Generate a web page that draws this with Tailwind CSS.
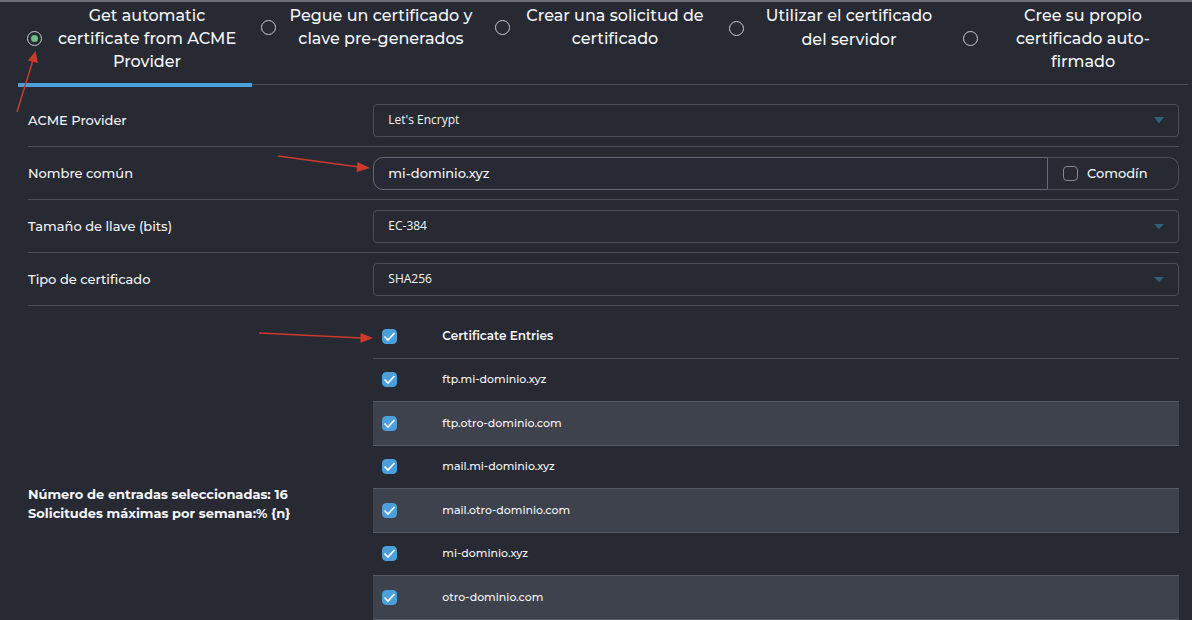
<!DOCTYPE html>
<html lang="es">
<head>
    <meta charset="UTF-8">
    <meta name="viewport" content="width=device-width, initial-scale=1.0">
    <title>Certificado SSL</title>
    <script src="https://cdn.jsdelivr.net/npm/@tailwindcss/browser@4"></script>
</head>
<body class="relative min-h-screen overflow-x-hidden bg-[#272a33] text-[#f4f5f8] font-['Montserrat','Inter',sans-serif]">

    <form class="border-t-2 border-[#6c6f76] pl-[18px] pr-1">

        <!-- Certificate source -->
        <div class="grid grid-cols-5 h-[85px] text-[16px] font-medium leading-[23px] text-center">
            <div class="flex items-start border-b-4 border-[#4b9fdb] pt-[2px] pl-[9px]">
                <label class="flex w-full items-center">
                    <input type="radio" name="source" checked class="size-[15px] shrink-0 appearance-none rounded-full border border-[#c9cbd1] bg-clip-content p-[3px] checked:bg-[#6dbf85]">
                    <span class="flex-1 px-2">Get automatic<br>certificate from ACME<br>Provider</span>
                </label>
            </div>
            <div class="flex items-start pt-[2px] pl-[9px] relative after:absolute after:inset-x-0 after:bottom-[2px] after:border-b after:border-[#4c4f58]">
                <label class="flex w-full items-center">
                    <input type="radio" name="source" class="size-[15px] shrink-0 appearance-none rounded-full border border-[#c9cbd1] bg-clip-content p-[3px] checked:bg-[#6dbf85]">
                    <span class="flex-1 px-2">Pegue un certificado y<br>clave pre-generados</span>
                </label>
            </div>
            <div class="flex items-start pt-[2px] pl-[9px] relative after:absolute after:inset-x-0 after:bottom-[2px] after:border-b after:border-[#4c4f58]">
                <label class="flex w-full items-center">
                    <input type="radio" name="source" class="size-[15px] shrink-0 appearance-none rounded-full border border-[#c9cbd1] bg-clip-content p-[3px] checked:bg-[#6dbf85]">
                    <span class="flex-1 px-2">Crear una solicitud de<br>certificado</span>
                </label>
            </div>
            <div class="flex items-start pt-[2px] pl-[9px] relative after:absolute after:inset-x-0 after:bottom-[2px] after:border-b after:border-[#4c4f58]">
                <label class="flex w-full items-center leading-6">
                    <input type="radio" name="source" class="size-[15px] shrink-0 appearance-none rounded-full border border-[#c9cbd1] bg-clip-content p-[3px] checked:bg-[#6dbf85]">
                    <span class="flex-1 px-2">Utilizar el certificado<br>del servidor</span>
                </label>
            </div>
            <div class="flex items-start pt-[2px] pl-[9px] relative after:absolute after:inset-x-0 after:bottom-[2px] after:border-b after:border-[#4c4f58]">
                <label class="flex w-full items-center">
                    <input type="radio" name="source" class="size-[15px] shrink-0 appearance-none rounded-full border border-[#c9cbd1] bg-clip-content p-[3px] checked:bg-[#6dbf85]">
                    <span class="flex-1 px-2">Cree su propio<br>certificado auto-<br>firmado</span>
                </label>
            </div>
        </div>

        <div class="pt-[7px] pl-[10px] pr-[9px] text-[13px] font-medium">

            <!-- ACME provider -->
            <div class="grid h-[53px] grid-cols-[30%_70%] items-center border-b border-[#4c4f58]">
                <label for="provider" class="pt-[2px]">ACME Provider</label>
                <div class="relative">
                    <select id="provider" class="block h-[33px] w-full appearance-none rounded-[4px] border border-[#4c4f58] bg-transparent px-[14px] font-['Open_Sans',sans-serif] text-[12px] font-normal">
                        <option>Let's Encrypt</option>
                    </select>
                    <svg class="pointer-events-none absolute top-[13px] right-[15px] h-[7px] w-[10px]" viewBox="0 0 10 7"><path d="M0 0h10L5 6.5z" fill="#2f607f"/></svg>
                </div>
            </div>

            <!-- Common name -->
            <div class="grid h-[53px] grid-cols-[30%_70%] items-center border-b border-[#4c4f58]">
                <label for="name" class="pt-[2px]">Nombre común</label>
                <div class="flex h-[33px]">
                    <input id="name" type="text" value="mi-dominio.xyz" class="min-w-0 flex-1 rounded-l-[10px] border border-[#666974] bg-[#272935] px-[14px] pt-[2px] text-[13px]">
                    <label class="flex w-[131px] items-center gap-[9px] rounded-r-[10px] border border-l-0 border-[#4c4f58] pl-[15px]">
                        <input type="checkbox" class="size-[15px] appearance-none rounded-[4px] border border-[#858892] checked:bg-[#4b9fdb]">
                        <span class="pt-[2px]">Comodín</span>
                    </label>
                </div>
            </div>

            <!-- Key size -->
            <div class="grid h-[53px] grid-cols-[30%_70%] items-center border-b border-[#4c4f58]">
                <label for="keysize" class="pt-[2px]">Tamaño de llave (bits)</label>
                <div class="relative">
                    <select id="keysize" class="block h-[33px] w-full appearance-none rounded-[4px] border border-[#4c4f58] bg-transparent px-[14px] font-['Open_Sans',sans-serif] text-[12px] font-normal">
                        <option>EC-384</option>
                    </select>
                    <svg class="pointer-events-none absolute top-[14px] right-[15px] h-[5px] w-[10px]" viewBox="0 0 10 5"><path d="M0 0h10L5 5z" fill="#2f607f"/></svg>
                </div>
            </div>

            <!-- Certificate type -->
            <div class="grid h-[53px] grid-cols-[30%_70%] items-center border-b border-[#4c4f58]">
                <label for="type" class="pt-[2px]">Tipo de certificado</label>
                <div class="relative">
                    <select id="type" class="block h-[33px] w-full appearance-none rounded-[4px] border border-[#4c4f58] bg-transparent px-[14px] font-['Open_Sans',sans-serif] text-[12px] font-normal">
                        <option>SHA256</option>
                    </select>
                    <svg class="pointer-events-none absolute top-[14px] right-[15px] h-[5px] w-[10px]" viewBox="0 0 10 5"><path d="M0 0h10L5 5z" fill="#2f607f"/></svg>
                </div>
            </div>

            <!-- Entries -->
            <div class="grid grid-cols-[30%_70%] pt-[9px]">
                <p class="pt-[170px] font-bold leading-[19px]">Número de entradas seleccionadas: 16<br>Solicitudes máximas por semana:% {n}</p>
                <table class="w-full table-fixed text-left text-[11px]">
                    <colgroup>
                        <col class="w-[69px]">
                        <col>
                    </colgroup>
                    <thead>
                        <tr class="h-[43px] border-b border-[#4c4f58]">
                            <td class="pl-[9px]"><input type="checkbox" aria-label="Certificate Entries" checked class="entry"></td>
                            <th class="text-[12px] font-semibold">Certificate Entries</th>
                        </tr>
                    </thead>
                    <tbody id="entries"></tbody>
                </table>
            </div>
        </div>
    </form>

    <!-- Hint arrows -->
    <svg class="pointer-events-none absolute top-0 left-0 h-[360px] w-[380px]" viewBox="0 0 380 360" fill="#cb3a2b" stroke="#cb3a2b">
        <path d="M17 112L33 60M278 156L359 167M259 333L362 338" fill="none" stroke-width="1.5"/>
        <path d="M35.500 51L38 63L28 60.500zM370 168L357.500 162L356.500 172zM373 338L360.500 333L360.500 343z" stroke="none"/>
    </svg>

    <template id="box">
        <span class="relative block size-[15px]">
            <input type="checkbox" checked class="peer block size-[15px] appearance-none rounded-[4px] border border-[#858892] checked:border-[#4b9fdb] checked:bg-[#4b9fdb]">
            <svg class="pointer-events-none absolute inset-0 hidden size-[15px] peer-checked:block" viewBox="0 0 15 15"><path d="M2.500 7.500L6 11L12.500 4" fill="none" stroke="#fff" stroke-width="1.6"/></svg>
        </span>
    </template>

    <script>
        const entries = [
            "ftp.mi-dominio.xyz",
            "ftp.otro-dominio.com",
            "mail.mi-dominio.xyz",
            "mail.otro-dominio.com",
            "mi-dominio.xyz",
            "otro-dominio.com"
        ];
        const box = document.getElementById("box");

        // Build a ticked box with its own id and name
        function makeBox(id, label) {
            const node = box.content.firstElementChild.cloneNode(true);
            const input = node.querySelector("input");
            input.id = id;
            if (label) input.setAttribute("aria-label", label);
            return node;
        }

        document.querySelector(".entry").replaceWith(makeBox("all", "Certificate Entries"));

        entries.forEach((name, i) => {
            const row = document.createElement("tr");
            row.className = "h-[43px] border-b border-[#555963] even:h-[44px] even:bg-[#3e424d]";
            row.innerHTML = `<td class="pl-[9px]"></td><td><label for="entry-${i}">${name}</label></td>`;
            row.firstElementChild.append(makeBox(`entry-${i}`));
            document.getElementById("entries").append(row);
        });

        // The header box ticks or clears every row
        document.getElementById("all").addEventListener("change", (event) => {
            document.querySelectorAll("#entries input").forEach((input) => {
                input.checked = event.target.checked;
            });
        });
    </script>
</body>
</html>
